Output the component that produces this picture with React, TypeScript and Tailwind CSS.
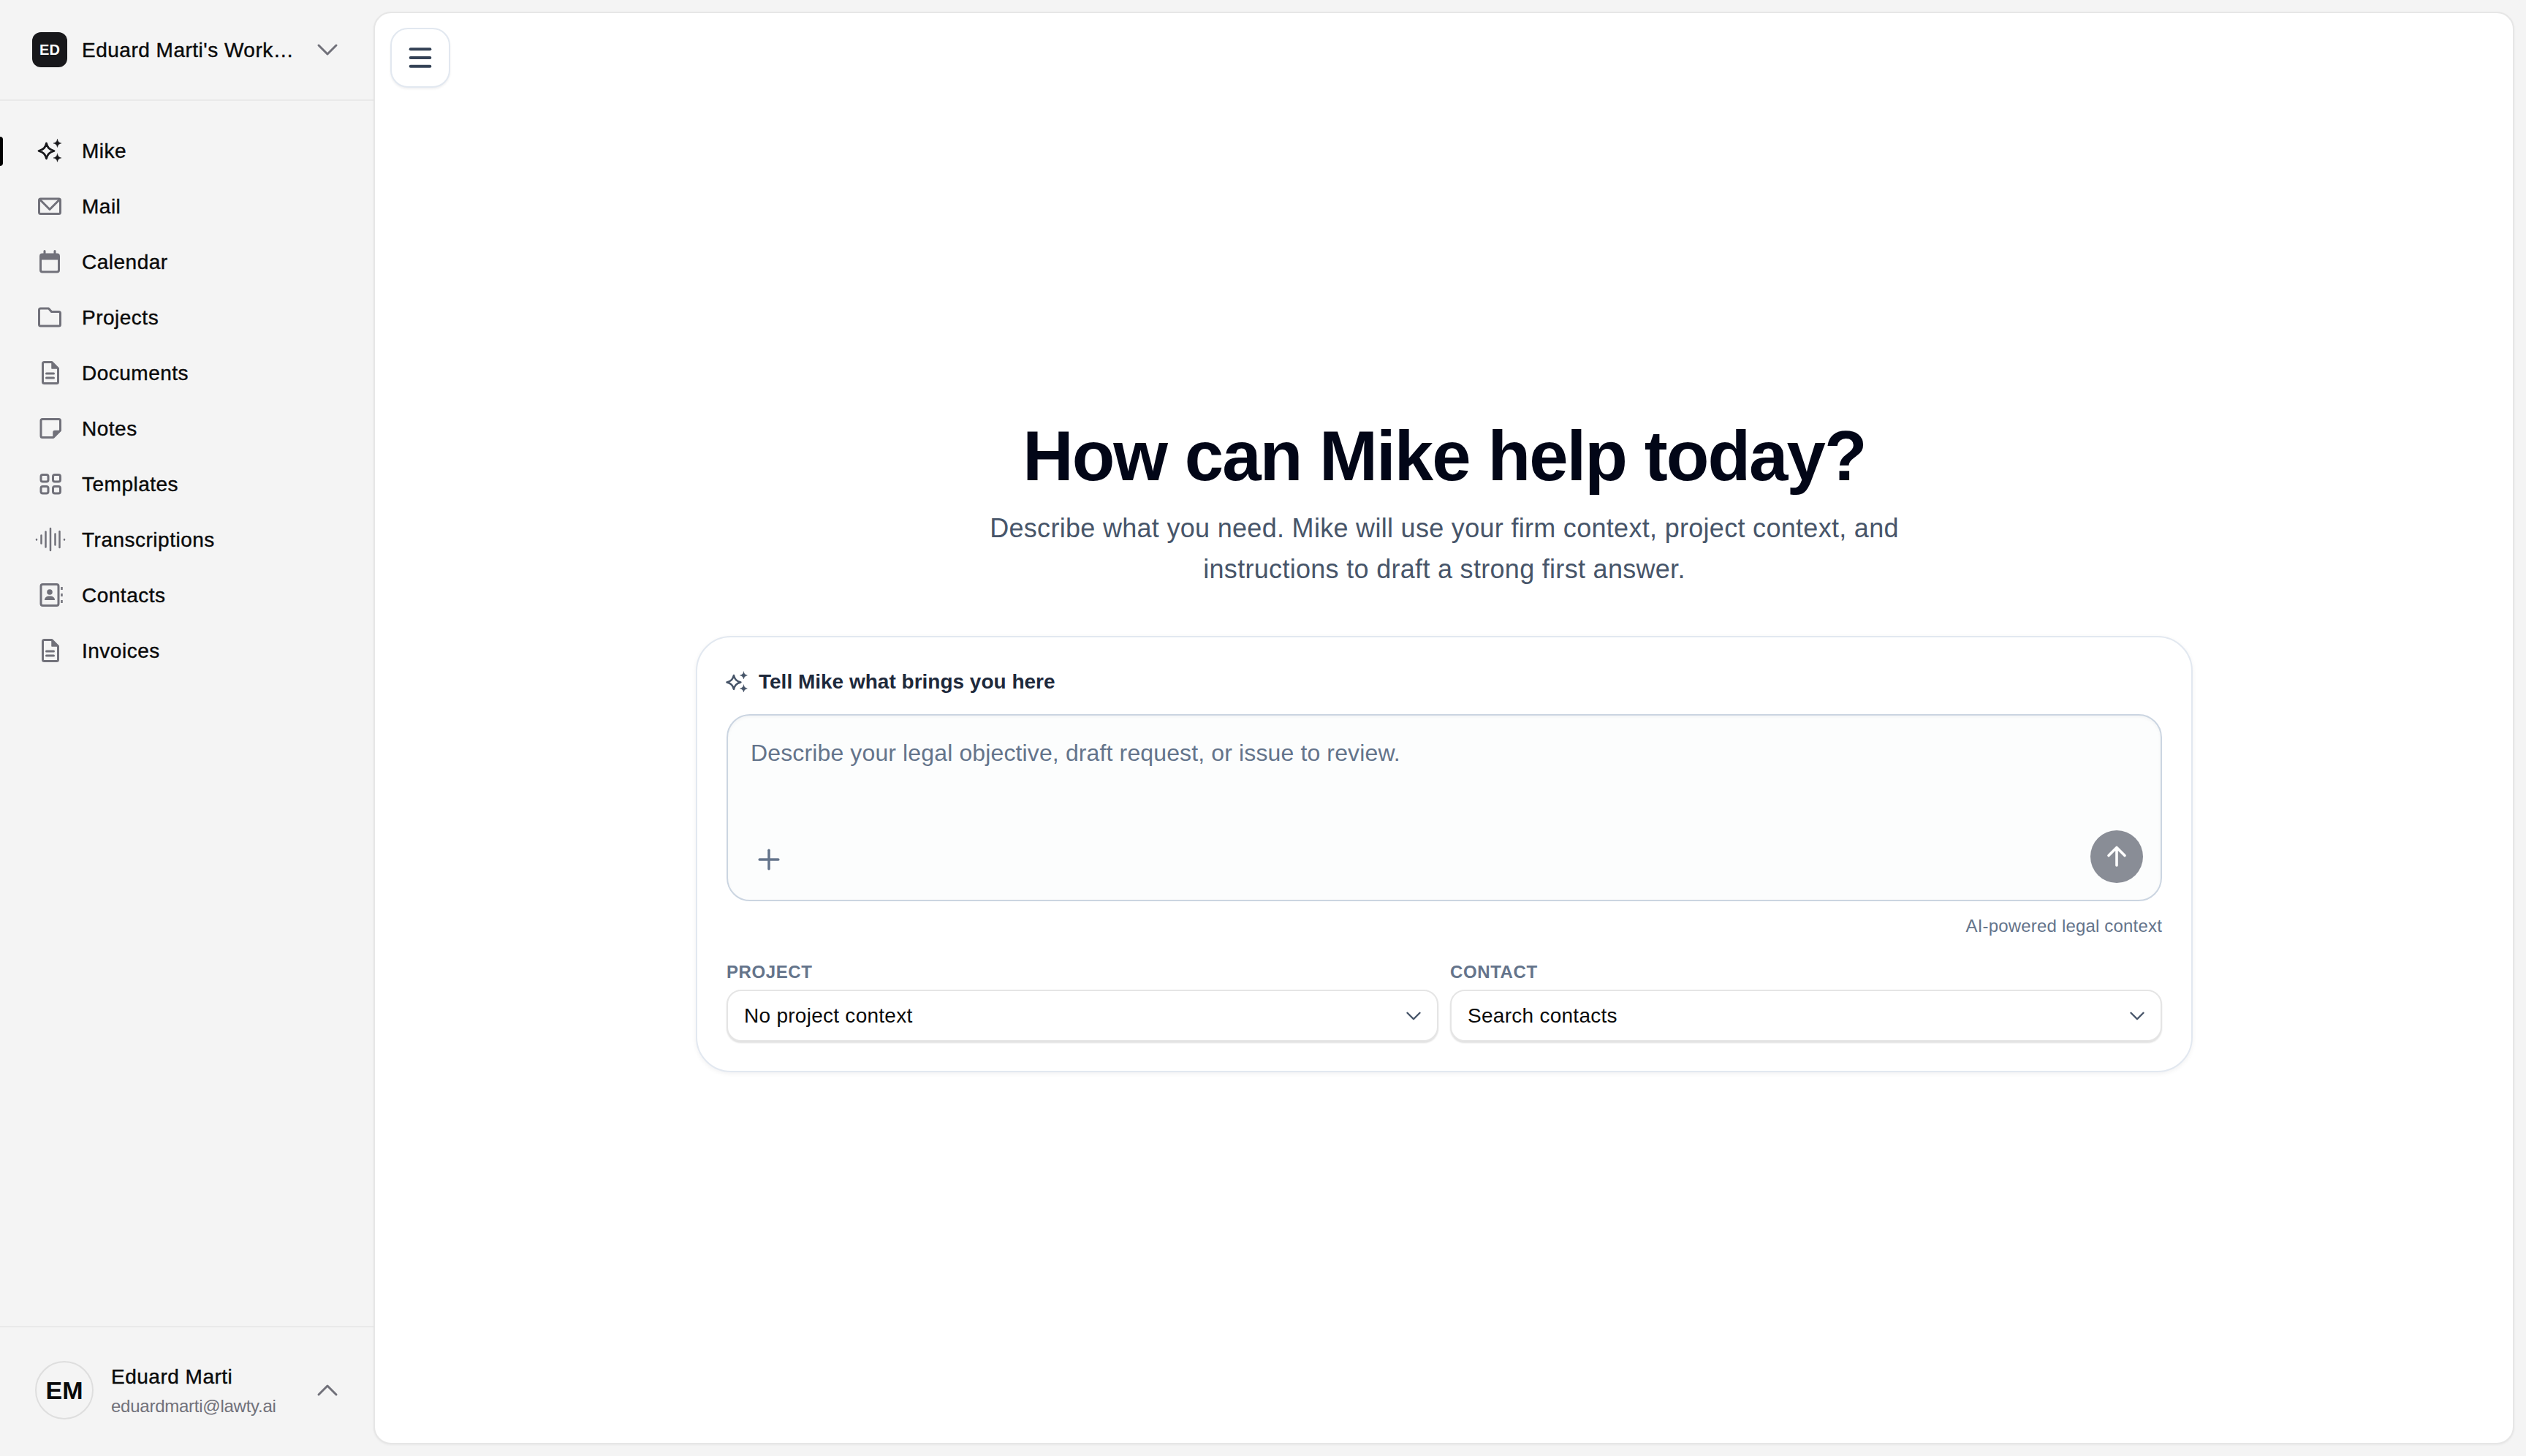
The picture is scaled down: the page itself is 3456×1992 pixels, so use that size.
import { ChevronDown, ChevronUp, Menu, Plus } from "lucide-react";
import type { ReactNode } from "react";

const FONT = "font-['Liberation_Sans',Arial,sans-serif]";
// Liberation has no 500 weight, a thin text stroke gets close to the medium labels
const MEDIUM = "font-normal tracking-[0.5px] [-webkit-text-stroke:0.4px_currentColor]";

function Glyph({ size = 40, children }: { size?: number; children: ReactNode }) {
  return (
    <svg
      width={size}
      height={size}
      viewBox="0 0 40 40"
      fill="none"
      stroke="currentColor"
      strokeWidth={3}
      strokeLinecap="round"
      strokeLinejoin="round"
      className="shrink-0 overflow-visible"
    >
      {children}
    </svg>
  );
}

function SparkleIcon({ size = 40 }: { size?: number }) {
  return (
    <Glyph size={size}>
      <path
        d="M15.5 10c1.5 6 3.8 8.600 10.500 10.500-6.700 1.900-9 4.500-10.500 10.500-1.500-6-3.800-8.600-10.500-10.500 6.700-1.900 9-4.500 10.500-10.500Z"
        strokeWidth={2.800}
      />
      <path
        d="M30.500 4.500c.7 3.300 2 4.600 5.500 5.500-3.500.9-4.800 2.200-5.500 5.500-.7-3.300-2-4.600-5.500-5.500 3.500-.9 4.800-2.200 5.500-5.500Z"
        fill="currentColor"
        strokeWidth={0.5}
      />
      <path
        d="M30.500 24.500c.7 3.300 2 4.600 5.500 5.500-3.500.9-4.800 2.200-5.500 5.500-.7-3.300-2-4.600-5.500-5.500 3.500-.9 4.800-2.200 5.500-5.500Z"
        fill="currentColor"
        strokeWidth={0.5}
      />
    </Glyph>
  );
}

function MailIcon() {
  return (
    <Glyph>
      <rect x="5.500" y="10" width="29" height="20.500" rx="2" />
      <path d="m6.500 11 13.500 13.500L33.500 11" />
    </Glyph>
  );
}

function CalendarIcon() {
  return (
    <Glyph>
      <rect x="7.500" y="10" width="25" height="24" rx="2.500" />
      <path d="M7.500 13.500h25" strokeWidth={8} strokeLinecap="butt" />
      <path d="M13 5.500V9M27 5.500V9" />
    </Glyph>
  );
}

function FolderIcon() {
  return (
    <Glyph>
      <path d="M5.500 10a2 2 0 0 1 2-2h11l4 4.500h10a2 2 0 0 1 2 2V30a2 2 0 0 1-2 2h-25a2 2 0 0 1-2-2Z" />
    </Glyph>
  );
}

function DocIcon() {
  return (
    <Glyph>
      <path d="M12.500 5.500H23L31.500 14v18.500a2 2 0 0 1-2 2h-17a2 2 0 0 1-2-2v-25a2 2 0 0 1 2-2Z" />
      <path d="M23 5.500 31.500 14H23Z" fill="currentColor" strokeWidth={1.500} />
      <path d="M15.500 21h10M15.500 27h10" />
    </Glyph>
  );
}

function NoteIcon() {
  return (
    <Glyph>
      <path d="M10 7.500h22.500a2 2 0 0 1 2 2V23L25 32.500H10a2 2 0 0 1-2-2v-21a2 2 0 0 1 2-2Z" />
      <path d="M34 23.500H27a2 2 0 0 0-2 2V32Z" fill="currentColor" strokeWidth={1.500} />
    </Glyph>
  );
}

function TemplatesIcon() {
  return (
    <Glyph>
      <rect x="8" y="7.500" width="10" height="9.500" rx="2.500" />
      <rect x="24.500" y="7.500" width="10" height="9.500" rx="2.500" />
      <rect x="8" y="23.500" width="10" height="9.500" rx="2.500" />
      <rect x="24.500" y="23.500" width="10" height="9.500" rx="2.500" />
    </Glyph>
  );
}

function WaveIcon() {
  return (
    <Glyph>
      <path
        d="M2 20v.500M8.500 14.500v11M14.500 9.500v21M21 5v30M27.500 12.500v15M33.500 9v22M40 20v.500"
        strokeWidth={2.500}
      />
    </Glyph>
  );
}

function ContactsIcon() {
  return (
    <Glyph>
      <rect x="8" y="5.500" width="24" height="29" rx="2.500" />
      <circle cx="20" cy="16" r="3.800" fill="currentColor" stroke="none" />
      <path d="M13 27c0-3.500 2.500-5.500 7-5.500s7 2 7 5.500Z" fill="currentColor" stroke="none" />
      <path d="M36.500 9v4M36.500 18v4M36.500 27v4" strokeWidth={2.500} strokeLinecap="butt" />
    </Glyph>
  );
}

const NAV_ITEMS = [
  { label: "Mike", icon: <SparkleIcon />, active: true },
  { label: "Mail", icon: <MailIcon /> },
  { label: "Calendar", icon: <CalendarIcon /> },
  { label: "Projects", icon: <FolderIcon /> },
  { label: "Documents", icon: <DocIcon /> },
  { label: "Notes", icon: <NoteIcon /> },
  { label: "Templates", icon: <TemplatesIcon /> },
  { label: "Transcriptions", icon: <WaveIcon /> },
  { label: "Contacts", icon: <ContactsIcon /> },
  { label: "Invoices", icon: <DocIcon /> },
];

function Sidebar() {
  return (
    <aside className="flex w-[511px] shrink-0 flex-col">
      <div className="flex h-[138px] items-center border-b-2 border-[#e9e9e9] pl-[44px] pr-[39px]">
        <div className="flex h-[48px] w-[48px] shrink-0 items-center justify-center rounded-[12px] bg-[#18181b] text-[20px] font-bold text-white">
          ED
        </div>
        <span className={`ml-[20px] whitespace-nowrap pt-[1px] text-[28px] text-[#0a0a0a] ${MEDIUM}`}>
          Eduard Marti's Work…
        </span>
        <ChevronDown size={48} strokeWidth={1.500} className="ml-auto shrink-0 text-[#71717a]" />
      </div>

      <nav className="flex-1 pt-[30px]">
        {NAV_ITEMS.map((item) => (
          <a key={item.label} className="relative flex h-[76px] items-center gap-[24px] pl-[48px]">
            {item.active && (
              <span className="absolute left-0 top-[19px] h-[40px] w-[4px] rounded-r-sm bg-black" />
            )}
            <span className={item.active ? "text-[#18181b]" : "text-[#71717a]"}>{item.icon}</span>
            <span className={`pt-[1px] text-[28px] text-[#0a0a0a] ${MEDIUM}`}>{item.label}</span>
          </a>
        ))}
      </nav>

      <div className="flex h-[178px] items-center border-t-2 border-[#e9e9e9] pb-[4px] pl-[48px] pr-[39px]">
        <div className="flex h-[80px] w-[80px] shrink-0 items-center justify-center rounded-full border-2 border-[#dedede] text-[34px] font-semibold text-[#0a0a0a]">
          EM
        </div>
        <div className="ml-[24px] flex flex-col gap-[7px] pt-[2px]">
          <span className={`text-[28px] leading-[34px] text-[#0a0a0a] ${MEDIUM}`}>Eduard Marti</span>
          <span className="text-[24px] leading-[32px] tracking-[-0.25px] text-[#71717a]">eduardmarti@lawty.ai</span>
        </div>
        <ChevronUp size={48} strokeWidth={1.500} className="ml-auto shrink-0 text-[#71717a]" />
      </div>
    </aside>
  );
}

function Picker({ label, value }: { label: string; value: string }) {
  return (
    <div>
      <div className="mb-[7px] h-[34px] text-[24px] leading-[34px] font-bold tracking-[0.6px] uppercase text-[#64748b]">
        {label}
      </div>
      <button className="flex h-[71px] w-full items-center justify-between rounded-[20px] border-2 border-[#e5e5e5] bg-white pl-[22px] pr-[15px] shadow-[0_2px_2px_rgba(0,0,0,0.12)]">
        <span className="text-[28px] tracking-[0.27px] text-[#0a0a0a]">{value}</span>
        <ChevronDown size={34} strokeWidth={1.700} className="text-[#475569]" />
      </button>
    </div>
  );
}

function Composer() {
  return (
    <section className="w-[2048px] rounded-[48px] border-2 border-[#e2e8f0] bg-white p-[40px] shadow-[0_2px_6px_rgba(15,23,42,0.06)]">
      <div className="mb-[23px] flex h-[42px] items-center">
        <span className="ml-[-4px] text-[#475569]">
          <SparkleIcon size={36} />
        </span>
        <span className="ml-[12px] text-[28px] font-bold text-[#1e293b]">Tell Mike what brings you here</span>
      </div>

      <div className="flex h-[256px] flex-col rounded-[32px] border-2 border-[#cbd5e1] bg-[#fcfdfd] shadow-[inset_0_2px_4px_rgba(15,23,42,0.04)]">
        <textarea
          rows={1}
          placeholder="Describe your legal objective, draft request, or issue to review."
          className="flex-1 resize-none bg-transparent pl-[31px] pr-[32px] pt-[27px] text-[32px] leading-[48px] tracking-[0.13px] outline-none placeholder:text-[#64748b]"
        />
        <div className="flex items-end justify-between pb-[23px] pl-[34px] pr-[24px]">
          <Plus size={44} strokeWidth={1.900} className="mb-[10px] text-[#64748b]" />
          <button className="flex h-[72px] w-[72px] items-center justify-center rounded-full bg-[#898d96] text-white">
            <Glyph>
              <path d="M20 7.500v24.500M9 18.500 20 7.500l11 11" strokeWidth={3.600} />
            </Glyph>
          </button>
        </div>
      </div>

      <p className="mt-[18px] text-right text-[24px] leading-[32px] tracking-[0.18px] text-[#64748b]">AI-powered legal context</p>

      <div className="mt-[30px] grid grid-cols-2 gap-[16px]">
        <Picker label="Project" value="No project context" />
        <Picker label="Contact" value="Search contacts" />
      </div>
    </section>
  );
}

export default function App() {
  return (
    <div className={`flex h-screen w-screen bg-[#f4f4f4] ${FONT}`}>
      <Sidebar />
      <main className="my-[16px] mr-[16px] flex flex-1 flex-col rounded-[24px] border-2 border-[#e6e6e6] bg-white pl-[21px] pr-[20px] pt-[20px] shadow-[0_1px_3px_rgba(0,0,0,0.05)]">
        <button className="flex h-[82px] w-[82px] items-center justify-center self-start rounded-[24px] border-2 border-[#e2e8f0] bg-white shadow-[0_2px_3px_rgba(15,23,42,0.06)]">
          <Menu size={40} strokeWidth={2.400} className="text-[#334155]" />
        </button>

        <div className="mt-[456px] flex flex-col items-center">
          <h1 className="text-[96px] leading-[96px] font-bold tracking-[-1.950px] text-[#020617]">
            How can Mike help today?
          </h1>
          <p className="mt-[23px] w-[1344px] text-center text-[36px] leading-[56px] tracking-[0.3px] text-[#475569]">
            Describe what you need. Mike will use your firm context, project context, and instructions to draft a strong first answer.
          </p>
          <div className="mt-[63px]">
            <Composer />
          </div>
        </div>
      </main>
    </div>
  );
}
